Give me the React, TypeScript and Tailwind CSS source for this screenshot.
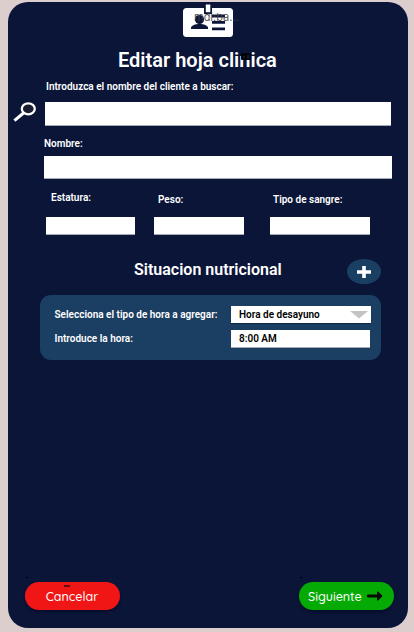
import React from 'react';

function IdCardIcon() {
  return (
    <div className="relative ml-[175px] h-[34px] w-[60px]">
      <svg width="60" height="34" viewBox="0 0 60 34" fill="none">
        <rect x="0" y="4" width="50" height="29" rx="3.5" fill="#fff" />
        <rect x="21" y="0" width="8" height="10" fill="#0a1538" />
        <rect x="22.8" y="0.500" width="4.500" height="7.700" fill="#fff" />
        <circle cx="16.5" cy="15.500" r="4.600" fill="#0a1538" />
        <path d="M8 25v-1c0-2.500 4.500-4 8.500-4s8.500 1.500 8.500 4v1z" fill="#0a1538" />
        <path d="M29 12h13M29 18.300h13M29 24.900h13" stroke="#0a1538" strokeWidth="2.800" />
      </svg>
      <span className="absolute left-[11px] top-[6px] whitespace-nowrap text-[11px] font-normal leading-[14px] text-[#444]/90 font-['Inter',sans-serif]">mdi:ba...</span>
    </div>
  );
}

function SearchIcon() {
  return (
    <svg width="25" height="23" viewBox="0 0 25 23" fill="none">
      <path d="M10.500 11 1.400 18.700" stroke="#fff" strokeWidth="3" />
      <ellipse cx="15.300" cy="6.800" rx="6.500" ry="5.500" fill="#1a1c31" stroke="#fff" strokeWidth="2.300" />
    </svg>
  );
}

function Field({ className }: { className: string }) {
  return <div className={`border-b border-[#a5a8b5] bg-white ${className}`} />;
}

export default function App() {
  return (
    <div className="h-[632px] w-[414px] bg-[#dbcecd] pl-2 pt-0.5 font-['Roboto',sans-serif] text-white">
      <main className="flex h-[626px] w-[400px] flex-col overflow-hidden rounded-[20px] bg-[#0a1538]">
        <header className="h-[75px] pt-0.5">
          <IdCardIcon />
          <h1 className="relative ml-[110px] mt-[10px] w-[165px] whitespace-nowrap text-[20px] font-semibold leading-6">
            Editar hoja clinica
            <svg className="absolute left-[123px] top-[5px]" width="10" height="8" viewBox="0 0 10 8">
              <rect width="10" height="7" rx="1" fill="#02040b" />
              <path d="M2 4h2m2-1h2M6 5h2" stroke="#343746" strokeWidth=".8" />
            </svg>
          </h1>
        </header>

        <div className="ml-[38px] flex h-[25px] items-start pt-[2px] text-[10px] font-semibold leading-4">Introduzca el nombre del cliente a buscar:</div>
        <div className="flex h-[24px]">
          <div className="w-[37px] pl-[5px]"><SearchIcon /></div>
          <Field className="h-6 w-[346px]" />
        </div>
        <div className="ml-9 h-[30px] pt-[10px] text-[10px] font-semibold leading-4">Nombre:</div>
        <Field className="ml-9 h-[23px] w-[348px]" />

        <div className="flex h-[38px] pt-[11px] text-[10px] font-semibold leading-4">
          <span className="ml-[43px] w-[107px]">Estatura:</span>
          <span className="w-[115px] pt-[2px]">Peso:</span>
          <span className="pt-[2px]">Tipo de sangre:</span>
        </div>
        <div className="flex h-[18px]">
          <Field className="ml-[38px] w-[89px]" />
          <Field className="ml-[19px] w-[90px]" />
          <Field className="ml-[26px] w-[100px]" />
        </div>

        <div className="flex h-[59.5px] pt-6">
          <h2 className="ml-[126px] mt-[-1px] w-[212.5px] whitespace-nowrap text-[16px] font-semibold leading-6">Situacion nutricional</h2>
          <button className="flex h-[25px] w-[34.5px] items-center justify-center rounded-[50%] bg-[#1b3e63]" aria-label="Agregar hora">
            <svg width="14" height="12" viewBox="0 0 14 12"><path d="M0 6h14M7 0v12" stroke="#fff" strokeWidth="3.600" /></svg>
          </button>
        </div>

        <section className="ml-8 flex h-[65.5px] w-[341px] shrink-0 flex-col gap-[6px] rounded-[11px] bg-[#1b3e63] pl-[14.5px] pt-[11px] text-[10px] font-semibold leading-[18px]">
          <div className="flex h-[18px]">
            <span className="w-[176.5px] whitespace-nowrap">Selecciona el tipo de hora a agregar:</span>
            <div className="flex h-[17px] w-[140px] justify-between bg-white pl-2 pr-[3px] text-black shadow-[0_1px_1px_#102b49]">
              <span>Hora de desayuno</span>
              <svg className="mt-[5px]" width="18" height="8" viewBox="0 0 18 8"><path d="M0 0h18L9 7.500z" fill="#c4c4c4" /></svg>
            </div>
          </div>
          <div className="flex h-[18px]">
            <span className="w-[176.5px]">Introduce la hora:</span>
            <div className="h-[17px] w-[139px] bg-white pl-2 text-black shadow-[0_1px_0_#a5a8b5]">8:00 AM</div>
          </div>
        </section>

        <footer className="mb-[18px] mt-auto flex justify-between pl-[16.5px] pr-[14px] font-['Quicksand','Lato',sans-serif] font-medium">
          <button className="relative flex h-7 w-[95px] items-center justify-center rounded-full bg-[#f11616] text-[12.500px] leading-4 shadow-[0_2px_3px_#060e2b]">
            Cancelar
            <span className="absolute left-[39px] top-[3px] h-[1.500px] w-[6px] bg-[#62100f]" />
            <span className="absolute left-[1px] top-[-5px] h-px w-[2px] bg-black" />
          </button>
          <button className="relative flex h-7 w-[95px] items-center rounded-full bg-[#05aa05] pl-[9px] text-[12.500px] leading-4 shadow-[0_2px_3px_#060e2b]">
            <span className="w-[59px] text-left">Siguiente</span>
            <svg width="16" height="10" viewBox="0 0 16 10"><path d="M1 3.500h9V1q0-1 1-.4l4 3.700q.6.700 0 1.400l-4 3.700q-1 .6-1-.4V6.500H1Q0 6.500 0 5.500v-1q0-1 1-1z" fill="#060b06" /></svg>
            <span className="absolute left-[1px] top-[-5px] h-px w-[2px] bg-black" />
          </button>
        </footer>
      </main>
    </div>
  );
}
